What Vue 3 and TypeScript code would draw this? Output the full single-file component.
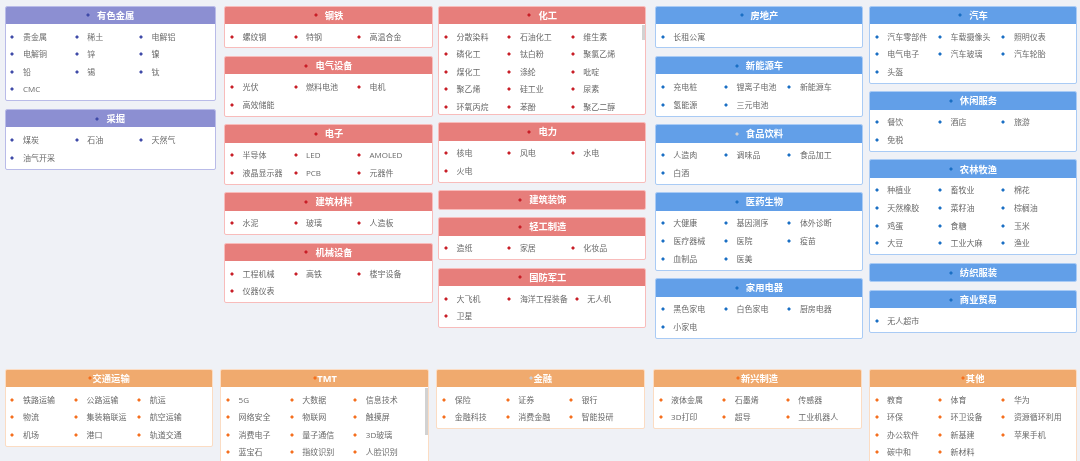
<script setup lang="ts">
type Theme = 'purple' | 'red' | 'blue' | 'orange'
interface Sector {
  title: string
  items: string[]
  theme: Theme
  muted?: boolean
  scroll?: boolean
}
const s = (theme: Theme, title: string, list: string, extra: Partial<Sector> = {}): Sector => ({
  theme,
  title,
  items: list ? list.split(' ') : [],
  ...extra,
})

const topColumns: Sector[][] = [
  [
    s('purple', '有色金属', '贵金属 稀土 电解铝 电解铜 锌 镍 铅 锡 钛 CMC'),
    s('purple', '采掘', '煤炭 石油 天然气 油气开采'),
  ],
  [
    s('red', '钢铁', '螺纹钢 特钢 高温合金'),
    s('red', '电气设备', '光伏 燃料电池 电机 高效储能'),
    s('red', '电子', '半导体 LED AMOLED 液晶显示器 PCB 元器件'),
    s('red', '建筑材料', '水泥 玻璃 人造板'),
    s('red', '机械设备', '工程机械 高铁 楼宇设备 仪器仪表'),
  ],
  [
    s('red', '化工', '分散染料 石油化工 维生素 磷化工 钛白粉 聚氯乙烯 煤化工 涤纶 吡啶 聚乙烯 硅工业 尿素 环氧丙烷 苯酚 聚乙二醇', { scroll: true }),
    s('red', '电力', '核电 风电 水电 火电'),
    s('red', '建筑装饰', ''),
    s('red', '轻工制造', '造纸 家居 化妆品'),
    s('red', '国防军工', '大飞机 海洋工程装备 无人机 卫星'),
  ],
  [
    s('blue', '房地产', '长租公寓'),
    s('blue', '新能源车', '充电桩 锂离子电池 新能源车 氢能源 三元电池'),
    s('blue', '食品饮料', '人造肉 调味品 食品加工 白酒', { muted: true }),
    s('blue', '医药生物', '大健康 基因测序 体外诊断 医疗器械 医院 疫苗 血制品 医美'),
    s('blue', '家用电器', '黑色家电 白色家电 厨房电器 小家电'),
  ],
  [
    s('blue', '汽车', '汽车零部件 车载摄像头 照明仪表 电气电子 汽车玻璃 汽车轮胎 头盔'),
    s('blue', '休闲服务', '餐饮 酒店 旅游 免税'),
    s('blue', '农林牧渔', '种植业 畜牧业 棉花 天然橡胶 菜籽油 棕榈油 鸡蛋 食糖 玉米 大豆 工业大麻 渔业'),
    s('blue', '纺织服装', ''),
    s('blue', '商业贸易', '无人超市'),
  ],
]

const bottomRow: Sector[] = [
  s('orange', '交通运输', '铁路运输 公路运输 航运 物流 集装箱联运 航空运输 机场 港口 轨道交通'),
  s('orange', 'TMT', '5G 大数据 信息技术 网络安全 物联网 触摸屏 消费电子 量子通信 3D玻璃 蓝宝石 指纹识别 人脸识别', { scroll: true }),
  s('orange', '金融', '保险 证券 银行 金融科技 消费金融 智能投研', { muted: true }),
  s('orange', '新兴制造', '液体金属 石墨烯 传感器 3D打印 超导 工业机器人'),
  s('orange', '其他', '教育 体育 华为 环保 环卫设备 资源循环利用 办公软件 新基建 苹果手机 碳中和 新材料'),
]
</script>

<template>
  <div class="page">
    <section class="top">
      <div v-for="(col, i) in topColumns" :key="i" class="col">
        <article
          v-for="sector in col"
          :key="sector.title"
          class="card"
          :class="[sector.theme, { muted: sector.muted }]"
        >
          <header class="head"><i class="dot" /><span>{{ sector.title }}</span></header>
          <ul v-if="sector.items.length" class="body">
            <li v-for="item in sector.items" :key="item" class="item"><i class="bullet" />{{ item }}</li>
          </ul>
          <i v-if="sector.scroll" class="thumb" />
        </article>
      </div>
    </section>
    <section class="bottom">
      <article
        v-for="sector in bottomRow"
        :key="sector.title"
        class="card"
        :class="[sector.theme, { muted: sector.muted }]"
      >
        <header class="head"><i class="dot" /><span>{{ sector.title }}</span></header>
        <ul class="body">
          <li v-for="item in sector.items" :key="item" class="item"><i class="bullet" />{{ item }}</li>
        </ul>
        <i v-if="sector.scroll" class="thumb" />
      </article>
    </section>
  </div>
</template>

<style scoped>
.page {
  width: 1080px;
  height: 461px;
  overflow: hidden;
  background: #eff1f6;
  font-family: "Open Sans", "Noto Sans CJK SC", "Noto Sans", sans-serif;
  filter: blur(0.3px);
}
.top {
  display: flex;
  align-items: flex-start;
  height: 368.5px;
  padding: 5.5px 0 0 4.7px;
  box-sizing: border-box;
}
.col { flex: none; width: 208px; }
.col:nth-child(1) { width: 211px; }
.col:nth-child(2) { width: 208.4px; margin-left: 8.6px; }
.col:nth-child(3) { margin-left: 5.6px; }
.col:nth-child(4) { margin-left: 8.7px; }
.col:nth-child(5) { margin-left: 6px; }

.bottom {
  display: flex;
  align-items: flex-start;
  padding-left: 4.7px;
}
.bottom .card { flex: none; width: 208.3px; margin: 0; }
.bottom .card:nth-child(2) { width: 209px; margin-left: 7.3px; }
.bottom .card:nth-child(3) { margin-left: 7.2px; }
.bottom .card:nth-child(4) { margin-left: 8px; width: 209px; }
.bottom .card:nth-child(5) { margin-left: 7px; }

.card {
  --head: #e77e7b;
  --line: #f8bcbb;
  --mark: #c81e27;
  position: relative;
  box-sizing: border-box;
  border: 1px solid var(--line);
  border-radius: 2px;
  margin-bottom: 7.5px;
  background: #fff;
  overflow: hidden;
}
.purple { --head: #8c8fd2; --line: #b9bbe8; --mark: #3f4aa8; }
.blue { --head: #629fe8; --line: #a9cbf5; --mark: #1a6fc4; }
.orange { --head: #f0aa6e; --line: #fbdcc3; --mark: #f56f1e; }

.head {
  display: flex;
  align-items: center;
  justify-content: center;
  gap: 7px;
  height: 17.5px;
  background: var(--head);
  color: #fff;
  font-size: 9.3px;
  font-weight: 700;
  line-height: 1;
}
.bottom .head { gap: 0.5px; }
.dot {
  width: 4px;
  height: 4px;
  background: radial-gradient(circle, var(--mark) 1px, transparent 2.1px);
  flex: none;
}
.muted .dot { background: radial-gradient(circle, #c9ced6 1px, transparent 2.1px); }

.body {
  list-style: none;
  display: flex;
  flex-wrap: wrap;
  align-content: flex-start;
  margin: 0;
  padding: 3.7px 2px 2.13px 3px;
  max-height: 89.5px;
  box-sizing: border-box;
  overflow: hidden;
}
.item {
  flex: none;
  display: flex;
  align-items: center;
  box-sizing: border-box;
  min-width: 31.5%;
  height: 17.67px;
  padding: 0 5px 0 1.8px;
  color: #696969;
  font-size: 8px;
  line-height: 1;
  white-space: nowrap;
}
.bullet {
  flex: none;
  width: 4px;
  height: 4px;
  margin-right: 8.5px;
  background: radial-gradient(circle, var(--mark) 1px, transparent 2.1px);
}
.thumb {
  position: absolute;
  top: 18px;
  right: 0;
  width: 3px;
  height: 15px;
  background: #d2d2d2;
}
.bottom .thumb { height: 47px; }
</style>

<style>
html, body { background: #eff1f6; overflow: hidden; }
</style>
